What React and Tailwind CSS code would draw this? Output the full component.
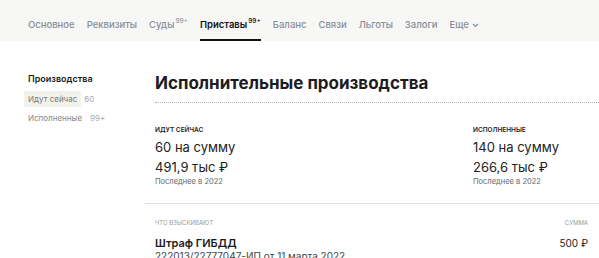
import React from "react";

const tabs = [
  { label: "Основное" },
  { label: "Реквизиты" },
  { label: "Суды", sup: "99+" },
  { label: "Приставы", sup: "99+", active: true },
  { label: "Баланс" },
  { label: "Связи" },
  { label: "Льготы" },
  { label: "Залоги" },
];

export default function App() {
  return (
    <div className="w-[599px] h-[258px] overflow-hidden bg-white" style={{ fontFamily: "Inter, 'Noto Sans', sans-serif" }}>
      <div className="h-[41px] bg-[#f7f7f5] flex items-stretch pl-[28px] gap-[12px]">
        {tabs.map((t) => (
          <div
            key={t.label}
            className={
              "flex items-center pt-[11px] text-[9.5px] leading-none border-b-2 " +
              (t.active ? "border-[#111] text-[#111] font-semibold" : "border-transparent text-[#8a8e9a] font-medium")
            }
          >
            <span>{t.label}</span>
            {t.sup && (
              <span className={"text-[6.5px] relative -top-[4px] ml-[1px] " + (t.active ? "text-[#111] font-medium" : "text-[#9a9ea8]")}>{t.sup}</span>
            )}
          </div>
        ))}
        <div className="flex items-center pt-[11px] text-[9.5px] leading-none border-b-2 border-transparent text-[#8a8e9a] font-medium gap-[3px]">
          <span>Еще</span>
          <svg width="7" height="5" viewBox="0 0 7 5" className="mt-[1px]">
            <path d="M1 1l2.5 2.5L6 1" fill="none" stroke="#8a8e9a" strokeWidth="1.2" />
          </svg>
        </div>
      </div>
      <div className="flex">
        <div className="w-[145px] shrink-0 pl-[24px] pt-[32px]">
          <div className="pl-[4px] text-[9px] font-semibold text-[#1a1a1a] leading-[12px]">Производства</div>
          <div className="mt-[6px] flex items-center">
            <span className="bg-[#f3f3ed] px-[4px] py-[3px] text-[8px] text-[#777] leading-[10px]">Идут сейчас</span>
            <span className="ml-[3px] text-[8px] text-[#aaa]">60</span>
          </div>
          <div className="mt-[5px] flex items-center pl-[4px]">
            <span className="text-[8px] text-[#888] leading-[10px]">Исполненные</span>
            <span className="ml-[8px] text-[8px] text-[#aaa]">99+</span>
          </div>
        </div>
        <div className="flex-1">
          <div className="pl-[10px] pr-0 pt-[30px]">
            <div className="text-[17px] font-bold text-[#1c1c22] leading-[24px]">Исполнительные производства</div>
            <div className="mt-[7px] border-b border-dotted border-[#b5b5b5]"></div>
            <div className="flex mt-[23px]">
              <div className="w-[318px]">
                <div className="text-[6.5px] font-semibold text-[#222] leading-[8px]">ИДУТ СЕЙЧАС</div>
                <div className="mt-[4px] text-[13px] text-[#222] leading-[18px]">60 на сумму</div>
                <div className="mt-[2px] text-[13px] text-[#222] leading-[18px]">491,9 тыс ₽</div>
                <div className="mt-[1px] text-[7.5px] text-[#666] leading-[10px]">Последнее в 2022</div>
              </div>
              <div>
                <div className="text-[6.5px] font-semibold text-[#222] leading-[8px]">ИСПОЛНЕННЫЕ</div>
                <div className="mt-[4px] text-[13px] text-[#222] leading-[18px]">140 на сумму</div>
                <div className="mt-[2px] text-[13px] text-[#222] leading-[18px]">266,6 тыс ₽</div>
                <div className="mt-[1px] text-[7.5px] text-[#666] leading-[10px]">Последнее в 2022</div>
              </div>
            </div>
          </div>
          <div className="mt-[16px] border-t border-[#e2e2e2]"></div>
          <div className="pl-[10px] pr-[11px] pt-[15px]">
            <div className="flex justify-between text-[6px] text-[#9a9a9a] leading-[8px]">
              <span>ЧТО ВЗЫСКИВАЮТ</span>
              <span>СУММА</span>
            </div>
            <div className="mt-[10px] flex justify-between leading-[13px]">
              <span className="text-[11px] font-semibold text-[#1c1c1c]">Штраф ГИБДД</span>
              <span className="text-[10px] text-[#222]">500 ₽</span>
            </div>
            <div className="text-[10px] text-[#444] leading-[12px]">222013/22777047-ИП от 11 марта 2022</div>
          </div>
        </div>
      </div>
    </div>
  );
}
